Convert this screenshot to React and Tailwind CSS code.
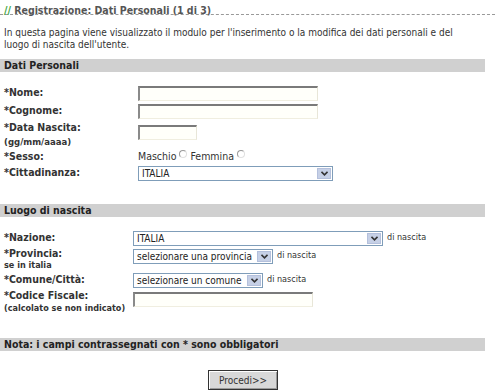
import React from "react";

const Input = ({ w }) => (
  <div
    className="h-[15px] bg-[#fffffa] border-t-2 border-l-2 border-r border-b border-t-[#7a7a7a] border-l-[#8a8a8a] border-r-[#e8e6d8] border-b-[#f0eee0]"
    style={{ width: w }}
  />
);

const Select = ({ w, text }) => (
  <div
    className="h-[15px] border border-[#7f9db9] bg-white flex items-stretch font-normal"
    style={{ width: w }}
  >
    <div className="flex-1 pl-[3px] text-[10px] leading-[13px] text-[#222] whitespace-nowrap overflow-hidden">
      {text}
    </div>
    <div className="w-[14px] m-[1px] bg-[#c6d0e6] border border-[#b4c0dc] flex items-center justify-center">
      <svg width="7" height="5" viewBox="0 0 7 5">
        <path d="M0.5 0.8 L3.5 3.8 L6.5 0.8" stroke="#333" strokeWidth="1.6" fill="none" />
      </svg>
    </div>
  </div>
);

const Bar = ({ children }) => (
  <div className="w-[485px] h-[13px] bg-[#d0d0d0] pl-[4px] text-[10.5px] leading-[13px] font-bold text-[#222]">
    {children}
  </div>
);

const Radio = () => (
  <span className="inline-block w-[8px] h-[8px] rounded-full border border-[#9a9a9a] border-r-[#e0e0e0] border-b-[#e0e0e0] mx-[3px] relative top-[-3px] bg-white" />
);

export default function App() {
  return (
    <div
      className="w-[500px] h-[390px] bg-white overflow-hidden text-[#333] relative"
      style={{ fontFamily: '"DejaVu Sans Condensed", "DejaVu Sans", Verdana, sans-serif', fontStretch: "condensed" }}
    >
      <div className="pt-[4px] pl-[4px] h-[15px] text-[10.5px] leading-[13px] font-bold text-[#555]">
        <span className="text-[#3aa43a]">//</span> Registrazione: Dati Personali (1 di 3)
      </div>
      <div className="w-[495px] border-b border-dashed border-[#999] mt-[-1px]" />
      <div className="pl-[4px] pt-[12px] text-[10px] leading-[12px] text-[#333] w-[462px]">
        In questa pagina viene visualizzato il modulo per l'inserimento o la modifica dei dati personali e del luogo di nascita dell'utente.
      </div>
      <div className="mt-[8px]">
        <Bar>Dati Personali</Bar>
      </div>

      <div className="mt-[12px] text-[10.5px] font-bold">
        <div className="flex items-center h-[18px]">
          <div className="w-[138px] pl-[4px]">*Nome:</div>
          <Input w={180} />
        </div>
        <div className="flex items-center h-[18px]">
          <div className="w-[138px] pl-[4px]">*Cognome:</div>
          <Input w={180} />
        </div>
        <div className="flex h-[29px]">
          <div className="w-[138px] pl-[4px] leading-[14px] pt-[0px]">
            <div>*Data Nascita:</div>
            <div className="text-[9.5px] leading-[16px]">(gg/mm/aaaa)</div>
          </div>
          <div className="pt-[5px]">
            <Input w={59} />
          </div>
        </div>
        <div className="flex items-center h-[15px]">
          <div className="w-[138px] pl-[4px]">*Sesso:</div>
          <div className="font-normal text-[10.5px] flex items-center">
            Maschio<Radio />Femmina<Radio />
          </div>
        </div>
        <div className="flex items-center h-[18px]">
          <div className="w-[138px] pl-[4px]">*Cittadinanza:</div>
          <Select w={195} text="ITALIA" />
        </div>
      </div>

      <div className="mt-[22px]">
        <Bar>Luogo di nascita</Bar>
      </div>

      <div className="mt-[12px] text-[10.5px] font-bold">
        <div className="flex items-center h-[18px]">
          <div className="w-[133px] pl-[4px]">*Nazione:</div>
          <Select w={250} text="ITALIA" />
          <span className="ml-[4px] text-[9px] font-normal">di nascita</span>
        </div>
        <div className="flex h-[24px]">
          <div className="w-[133px] pl-[4px] leading-[12px] pt-[0px]">
            <div>*Provincia:</div>
            <div className="text-[9px]">se in italia</div>
          </div>
          <div className="flex items-center h-[18px]">
            <Select w={140} text="selezionare una provincia" />
            <span className="ml-[4px] text-[9px] font-normal">di nascita</span>
          </div>
        </div>
        <div className="flex items-center h-[18px]">
          <div className="w-[133px] pl-[4px]">*Comune/Città:</div>
          <Select w={130} text="selezionare un comune" />
          <span className="ml-[4px] text-[9px] font-normal">di nascita</span>
        </div>
        <div className="flex h-[26px]">
          <div className="w-[133px] pl-[4px] leading-[13px] pt-[0px]">
            <div>*Codice Fiscale:</div>
            <div className="text-[9px] whitespace-nowrap">(calcolato se non indicato)</div>
          </div>
          <div className="pt-[3px]">
            <Input w={180} />
          </div>
        </div>
      </div>

      <div className="mt-[23px]">
        <Bar>Nota: i campi contrassegnati con * sono obbligatori</Bar>
      </div>

      <div className="mt-[19px] flex">
        <div className="ml-[208px] w-[70px] h-[20px] border border-[#333] bg-[#d8d8d8] shadow-[inset_1px_1px_0_#fff,inset_-1px_-1px_0_#999] flex items-center justify-center text-[10px] text-[#333]">
          Procedi&gt;&gt;
        </div>
      </div>
    </div>
  );
}
